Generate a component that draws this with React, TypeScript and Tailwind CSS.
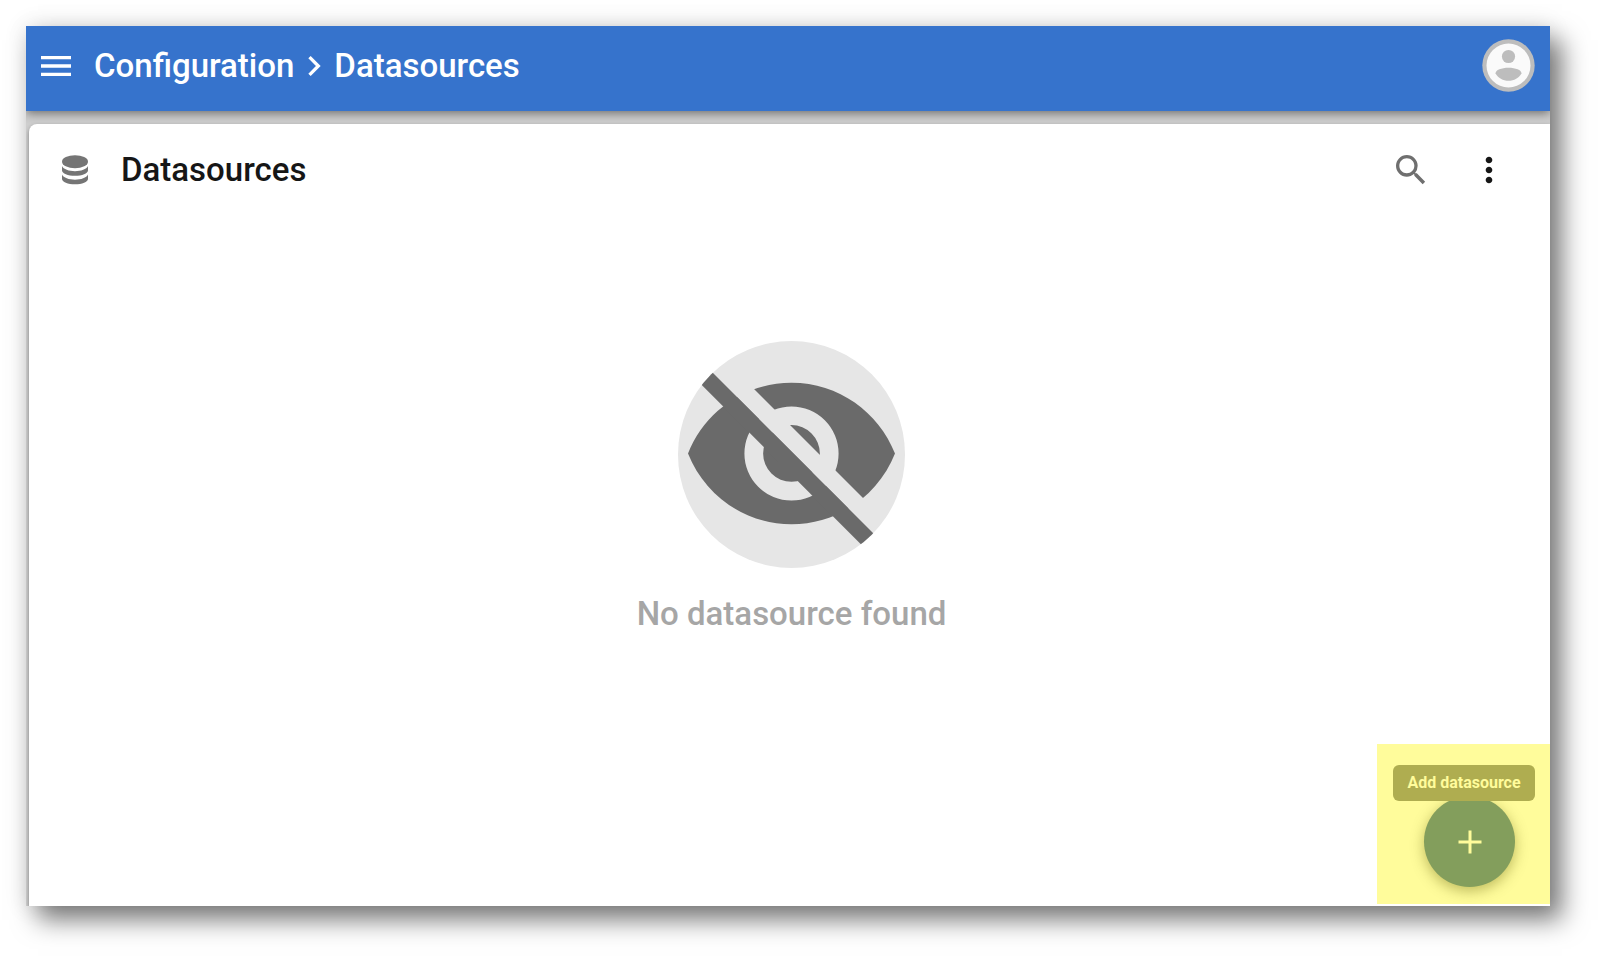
import React from 'react'
import { MdChevronRight, MdMenu, MdMoreVert, MdSearch } from 'react-icons/md'

const App = (): JSX.Element => {
    return (
        <div className="min-h-screen bg-white pl-[26px] pt-[26px] pb-[50px] pr-[50px] flex flex-col font-[Roboto,sans-serif]">
            <div className="relative flex-1 flex flex-col shadow-[12px_14px_24px_rgba(0,0,0,0.5),0_0_22px_rgba(0,0,0,0.12)]">
                <div className="flex-1 flex flex-col overflow-hidden bg-[#cfcfcf]">
                    <Header />
                    <Datasources />
                </div>
                <AddDatasource />
            </div>
        </div>
    );
}

export default App

const Header = (): JSX.Element => {
    return (
        <header className="flex flex-row items-center h-[85px] pl-[10px] pr-[15px] pb-[6px] bg-[#3673cc] text-white shadow-[0_2px_10px_rgba(0,0,0,0.5)]">
            <button aria-label="Open menu" className="cursor-pointer">
                <MdMenu className="size-10" />
            </button>
            <nav aria-label="Breadcrumb" className="flex flex-row items-center ml-[18px] text-[33px] leading-10 font-medium">
                <a href="#configuration">Configuration</a>
                <MdChevronRight className="size-10" />
                <a href="#datasources">Datasources</a>
            </nav>
            <button aria-label="Account" className="ml-auto cursor-pointer">
                <Avatar />
            </button>
        </header>
    );
}

const Datasources = (): JSX.Element => {
    return (
        <main className="flex-1 flex flex-col mt-[13px] ml-[3px] rounded-tl-lg bg-white shadow-[0_2px_4px_rgba(0,0,0,0.4)]">
            <div className="flex flex-row items-center h-[91px] pl-[33px] pr-[41px]">
                <DatabaseIcon />
                <h1 className="ml-[33px] text-[33px] leading-10 font-medium text-[#161616]">Datasources</h1>
                <button aria-label="Search" className="ml-auto text-[#6f6f6f] cursor-pointer">
                    <MdSearch className="size-10" />
                </button>
                <button aria-label="More options" className="ml-[38px] text-[#161616] cursor-pointer">
                    <MdMoreVert className="size-10" />
                </button>
            </div>
            <div className="flex flex-col items-center mt-[126px] pl-1">
                <EyeOff />
                <p className="mt-6 text-[33px] leading-11 font-medium text-[#a6a6a6]">No datasource found</p>
            </div>
        </main>
    );
}

const AddDatasource = (): JSX.Element => {
    return (
        <div className="absolute right-0 bottom-[2px] w-[173px] h-[160px] pt-[21px] pr-[15px] flex flex-col items-end bg-[#fffc9b]">
            <div role="tooltip" className="relative z-10 flex items-center justify-center w-[142px] h-9 rounded-md bg-[#afad50] text-base font-bold text-[#fffc9b]">
                Add datasource
            </div>
            <button aria-label="Add datasource" className="-mt-[5px] mr-5 flex items-center justify-center size-[91px] rounded-full bg-[#839e5c] text-[#fffc9b] shadow-[0_4px_14px_rgba(90,90,0,0.4)] cursor-pointer">
                <svg viewBox="0 0 24 24" className="size-6" fill="currentColor">
                    <path d="M10.5 0.5h3v10h10v3h-10v10h-3v-10h-10v-3h10z" />
                </svg>
            </button>
        </div>
    );
}

const Avatar = (): JSX.Element => (
    <svg viewBox="0 0 53 53" className="size-[53px]">
        <circle cx="26.5" cy="26.5" r="26.2" fill="#bdbdbd" />
        <circle cx="26.5" cy="26.5" r="22" fill="#fafafa" />
        <circle cx="26.5" cy="17.5" r="6.6" fill="#bdbdbd" />
        <path d="M13.5 34.5c0-3.5 6-5.7 13-5.7s13 2.2 13 5.7c-2.5 4.5-7.5 7.3-13 7.3s-10.5-2.8-13-7.3z" fill="#bdbdbd" />
    </svg>
)

const DatabaseIcon = (): JSX.Element => (
    <svg viewBox="0 0 26 30" className="w-[26px] h-[30px]" fill="#757575">
        <ellipse cx="13" cy="6.7" rx="13" ry="6.5" />
        <path d="M0 11c1.5 3.2 7 5.2 13 5.2s11.5-2 13-5.2v4.500c0 3-6 5.300-13 5.300S0 18.500 0 15.500z" />
        <path d="M0 19.500c1.500 3.200 7 5.200 13 5.200s11.500-2 13-5.200v4.500c0 3-6 5.300-13 5.300S0 27 0 24z" />
    </svg>
)

const EyeOff = (): JSX.Element => (
    <svg viewBox="56 63 680 680" className="size-[227px]">
        <defs>
            <clipPath id="disc">
                <circle cx="396" cy="403" r="340" />
            </clipPath>
            <mask id="cut" maskUnits="userSpaceOnUse" x="56" y="63" width="680" height="680">
                <rect x="56" y="63" width="680" height="680" fill="#fff" />
                <path d="M2 0L802 800H877L77 0z" fill="#000" />
            </mask>
        </defs>
        <circle cx="396" cy="403" r="340" fill="#e6e6e6" />
        <g fill="#6a6a6a">
            <path
                mask="url(#cut)"
                fillRule="evenodd"
                d="M396 188C255 188 135 276 86 400c49 124 169 212 310 212s261-88 310-212c-49-124-169-212-310-212zM396 541a141 141 0 1 1 0-282a141 141 0 1 1 0 282zM396 315a85 85 0 1 0 0 170a85 85 0 1 0 0-170z"
            />
            <path clipPath="url(#disc)" d="M2 0L802 800H732L-68 0z" />
        </g>
    </svg>
)
